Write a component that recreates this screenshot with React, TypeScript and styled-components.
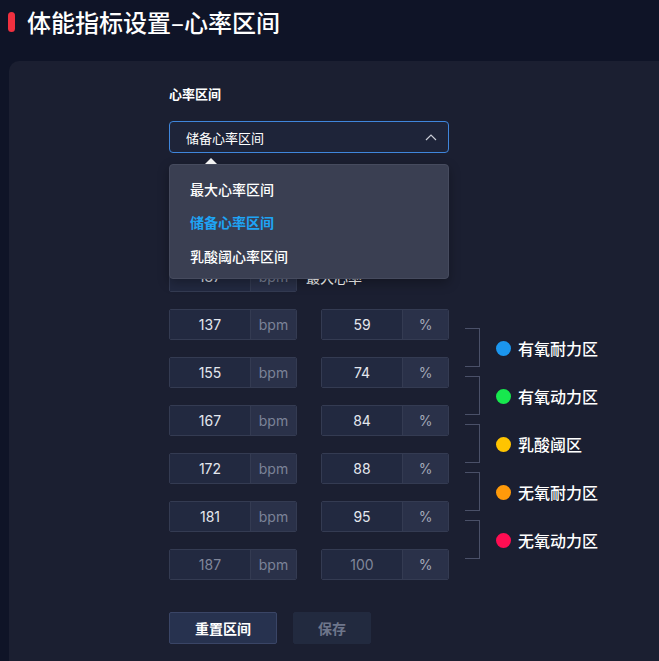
import React from "react";
import styled, { createGlobalStyle } from "styled-components";

const GlobalStyle = createGlobalStyle`
  html, body {
    margin: 0;
    padding: 0;
    background: #0f1427;
    font-family: "Noto Sans CJK SC", "Noto Sans", sans-serif;
    overflow: hidden;
  }
`;

const Page = styled.div`
  width: 659px;
  height: 661px;
  display: flex;
  flex-direction: column;
  background: #0f1427;
`;

const Header = styled.div`
  height: 61px;
  display: flex;
  align-items: flex-start;
  padding: 7px 0 0 8px;
  box-sizing: border-box;
  gap: 12px;
`;

const RedMark = styled.span`
  width: 7px;
  height: 20px;
  margin-top: 5px;
  border-radius: 4px;
  background: #f0303f;
`;

const Title = styled.h1`
  margin: 0;
  font-size: 24px;
  line-height: 30px;
  font-weight: 500;
  color: #ffffff;
`;

const Card = styled.div`
  flex: 1;
  margin-left: 9px;
  border-radius: 10px 0 0 0;
  background: #1b1f31;
  padding: 23px 0 0 160px;
`;

const Label = styled.div`
  font-size: 13px;
  line-height: 20px;
  font-weight: 700;
  color: #ffffff;
  margin-bottom: 17px;
`;

const SelectWrap = styled.div`
  position: relative;
  width: 280px;
  z-index: 2;
`;

const SelectBox = styled.div`
  height: 32px;
  box-sizing: border-box;
  border: 1px solid #3f86dc;
  border-radius: 4px;
  background: #1e2439;
  display: flex;
  align-items: center;
  justify-content: space-between;
  padding: 0 10px 0 16px;
  font-size: 13px;
  color: #ffffff;
`;

const Menu = styled.div`
  position: absolute;
  top: 43px;
  left: 0;
  width: 280px;
  height: 115px;
  box-sizing: border-box;
  padding: 7px 0;
  background: #3a3f52;
  border: 1px solid #464b5e;
  border-radius: 4px;
  box-shadow: 0 4px 12px rgba(0, 0, 0, 0.3);
  &::before {
    content: "";
    position: absolute;
    top: -7px;
    left: 35px;
    border-left: 6px solid transparent;
    border-right: 6px solid transparent;
    border-bottom: 6px solid #f2f2f2;
  }
`;

const MenuItem = styled.div<{ $active?: boolean }>`
  height: 33.5px;
  display: flex;
  align-items: center;
  padding-left: 20px;
  font-size: 14px;
  font-weight: ${(p) => (p.$active ? 700 : 500)};
  color: ${(p) => (p.$active ? "#1ea4f5" : "#ffffff")};
`;

const MaxRow = styled.div`
  margin-top: 108px;
  display: flex;
  align-items: center;
  gap: 9px;
`;

const MaxLabel = styled.span`
  font-size: 14px;
  color: #ffffff;
`;

const Zones = styled.div`
  margin-top: 17px;
  display: flex;
`;

const Rows = styled.div`
  display: flex;
  flex-direction: column;
  gap: 17px;
`;

const Row = styled.div`
  display: flex;
  gap: 24px;
`;

const Group = styled.div`
  width: 128px;
  height: 31px;
  box-sizing: border-box;
  display: flex;
  border: 1px solid #343b52;
  border-radius: 2px;
  overflow: hidden;
`;

const Num = styled.div<{ $dim?: boolean }>`
  width: 80px;
  display: flex;
  align-items: center;
  justify-content: center;
  background: #222940;
  font-family: Inter, "Noto Sans", sans-serif;
  font-size: 14px;
  color: ${(p) => (p.$dim ? "#80869a" : "#e4e7ee")};
`;

const Unit = styled.div<{ $light?: boolean }>`
  flex: 1;
  display: flex;
  align-items: center;
  justify-content: center;
  background: #2a3149;
  border-left: 1px solid #343b52;
  font-family: Inter, "Noto Sans", sans-serif;
  font-size: 14px;
  color: ${(p) => (p.$light ? "#a3a8b8" : "#7c8398")};
`;

const Legend = styled.div`
  display: flex;
  flex-direction: column;
  padding-top: 15px;
  margin-left: 16px;
`;

const ZoneItem = styled.div`
  height: 48px;
  display: flex;
  align-items: center;
`;

const Bracket = styled.div`
  width: 15px;
  height: 39px;
  margin-top: -1px;
  border: 1px solid #4a5068;
  border-left: none;
  box-sizing: border-box;
`;

const Dot = styled.span<{ $color: string }>`
  width: 15px;
  height: 15px;
  border-radius: 50%;
  background: ${(p) => p.$color};
  margin: 0 7px 0 16px;
`;

const ZoneName = styled.span`
  font-size: 16px;
  font-weight: 500;
  color: #ffffff;
`;

const Actions = styled.div`
  margin-top: 32px;
  display: flex;
  gap: 16px;
`;

const Button = styled.button<{ $primary?: boolean }>`
  height: 32px;
  width: ${(p) => (p.$primary ? "108px" : "78px")};
  border-radius: 2px;
  border: 1px solid ${(p) => (p.$primary ? "#3a4566" : "#222a3f")};
  background: ${(p) => (p.$primary ? "#27324f" : "#222a3f")};
  color: ${(p) => (p.$primary ? "#ffffff" : "#6e768b")};
  font-family: inherit;
  font-size: 14px;
  font-weight: 700;
  padding: 0;
`;

const rows = [
  [137, 59],
  [155, 74],
  [167, 84],
  [172, 88],
  [181, 95],
  [187, 100],
];

const zones = [
  { name: "有氧耐力区", color: "#1b96ee" },
  { name: "有氧动力区", color: "#17e84e" },
  { name: "乳酸阈区", color: "#ffc400" },
  { name: "无氧耐力区", color: "#ff9a0a" },
  { name: "无氧动力区", color: "#ff0d52" },
];

const App = () => {
  return (
    <Page>
      <GlobalStyle />
      <Header>
        <RedMark />
        <Title>体能指标设置–心率区间</Title>
      </Header>
      <Card>
        <Label>心率区间</Label>
        <SelectWrap>
          <SelectBox>
            <span>储备心率区间</span>
            <svg width="14" height="10" viewBox="0 0 14 10">
              <polyline points="2,8 7,3 12,8" fill="none" stroke="#c9ccd6" strokeWidth="1.2" />
            </svg>
          </SelectBox>
          <Menu>
            <MenuItem>最大心率区间</MenuItem>
            <MenuItem $active>储备心率区间</MenuItem>
            <MenuItem>乳酸阈心率区间</MenuItem>
          </Menu>
        </SelectWrap>
        <MaxRow>
          <Group>
            <Num>187</Num>
            <Unit>bpm</Unit>
          </Group>
          <MaxLabel>最大心率</MaxLabel>
        </MaxRow>
        <Zones>
          <Rows>
            {rows.map(([bpm, pct], i) => {
              const last = i === rows.length - 1;
              return (
                <Row key={i}>
                  <Group>
                    <Num $dim={last}>{bpm}</Num>
                    <Unit>bpm</Unit>
                  </Group>
                  <Group>
                    <Num $dim={last}>{pct}</Num>
                    <Unit $light>%</Unit>
                  </Group>
                </Row>
              );
            })}
          </Rows>
          <Legend>
            {zones.map((z) => (
              <ZoneItem key={z.name}>
                <Bracket />
                <Dot $color={z.color} />
                <ZoneName>{z.name}</ZoneName>
              </ZoneItem>
            ))}
          </Legend>
        </Zones>
        <Actions>
          <Button $primary>重置区间</Button>
          <Button>保存</Button>
        </Actions>
      </Card>
    </Page>
  );
};

export default App;
